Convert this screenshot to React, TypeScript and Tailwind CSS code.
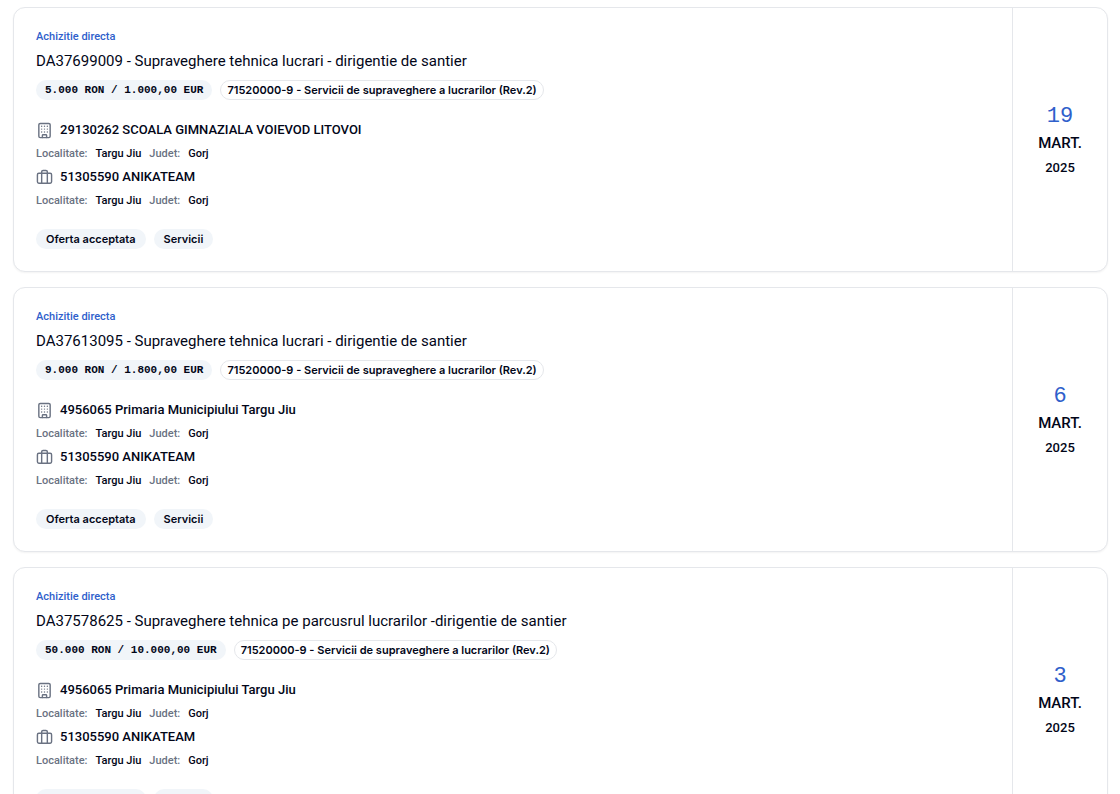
import React from "react";
import { Briefcase, Building } from "lucide-react";

type Party = { name: string; city: string; county: string };

type Purchase = {
  title: string;
  value: string;
  cpv: string;
  authority: Party;
  supplier: Party;
  tags: string[];
  day: string;
  month: string;
  year: string;
};

const cpv = "71520000-9 - Servicii de supraveghere a lucrarilor (Rev.2)";
const supplier: Party = { name: "51305590 ANIKATEAM", city: "Targu Jiu", county: "Gorj" };
const cityHall: Party = { name: "4956065 Primaria Municipiului Targu Jiu", city: "Targu Jiu", county: "Gorj" };
const tags = ["Oferta acceptata", "Servicii"];

const purchases: Purchase[] = [
  {
    title: "DA37699009 - Supraveghere tehnica lucrari - dirigentie de santier",
    value: "5.000 RON / 1.000,00 EUR",
    cpv,
    authority: { name: "29130262 SCOALA GIMNAZIALA VOIEVOD LITOVOI", city: "Targu Jiu", county: "Gorj" },
    supplier,
    tags,
    day: "19",
    month: "MART.",
    year: "2025",
  },
  {
    title: "DA37613095 - Supraveghere tehnica lucrari - dirigentie de santier",
    value: "9.000 RON / 1.800,00 EUR",
    cpv,
    authority: cityHall,
    supplier,
    tags,
    day: "6",
    month: "MART.",
    year: "2025",
  },
  {
    title: "DA37578625 - Supraveghere tehnica pe parcusrul lucrarilor -dirigentie de santier",
    value: "50.000 RON / 10.000,00 EUR",
    cpv,
    authority: cityHall,
    supplier,
    tags,
    day: "3",
    month: "MART.",
    year: "2025",
  },
];

function PartyInfo({ party, icon: Icon }: { party: Party; icon: typeof Building }) {
  return (
    <div>
      <div className="flex items-center gap-[7px] text-[13px] leading-6 font-medium">
        <Icon className="size-[17px] text-gray-500" strokeWidth={2} aria-hidden="true" />
        <span>{party.name}</span>
      </div>
      <dl className="flex text-[11px] leading-[23px] font-medium">
        <dt className="text-gray-500">Localitate:</dt>
        <dd className="mr-2 ml-2">{party.city}</dd>
        <dt className="text-gray-500">Judet:</dt>
        <dd className="ml-2">{party.county}</dd>
      </dl>
    </div>
  );
}

function PurchaseCard({ item }: { item: Purchase }) {
  return (
    <article className="flex rounded-xl border border-gray-200 bg-white shadow-xs">
      <div className="min-w-0 flex-1 px-[22px] pt-[21px] pb-[22px]">
        <p className="text-[11px] leading-4 font-medium text-[#2f60cb]">Achizitie directa</p>
        <h2 className="mt-1 text-[15px] leading-6">{item.title}</h2>
        <div className="mt-[7px] flex flex-wrap gap-2 text-[11px]">
          <span className="rounded-full bg-slate-100 px-[9px] font-['Liberation_Mono',monospace] leading-5 font-bold">
            {item.value}
          </span>
          <span className="rounded-full border border-gray-200 px-[6px] font-[Inter,sans-serif] leading-[18px] font-semibold">
            {item.cpv}
          </span>
        </div>
        <div className="mt-[18px]">
          <PartyInfo party={item.authority} icon={Building} />
          <PartyInfo party={item.supplier} icon={Briefcase} />
        </div>
        <div className="mt-[17px] flex gap-2 font-[Inter,sans-serif] text-[11px] leading-5 font-semibold">
          {item.tags.map((tag) => (
            <span key={tag} className="rounded-full bg-slate-100 px-[10px]">
              {tag}
            </span>
          ))}
        </div>
      </div>
      <time className="flex w-[95px] shrink-0 flex-col items-center justify-center border-l border-gray-200">
        <span className="h-8 font-['Liberation_Mono',monospace] text-[22px] leading-9 text-[#2f60cb]">{item.day}</span>
        <span className="text-[15px] leading-[25px] font-medium">{item.month}</span>
        <span className="text-[13px] leading-6 font-medium">{item.year}</span>
      </time>
    </article>
  );
}

export default function App() {
  return (
    <main className="flex max-h-screen flex-col gap-[15px] overflow-hidden bg-white pt-[7px] pr-3 pl-[13px] font-[Roboto,sans-serif] text-slate-950 *:shrink-0">
      {purchases.map((item) => (
        <PurchaseCard key={item.title} item={item} />
      ))}
    </main>
  );
}
